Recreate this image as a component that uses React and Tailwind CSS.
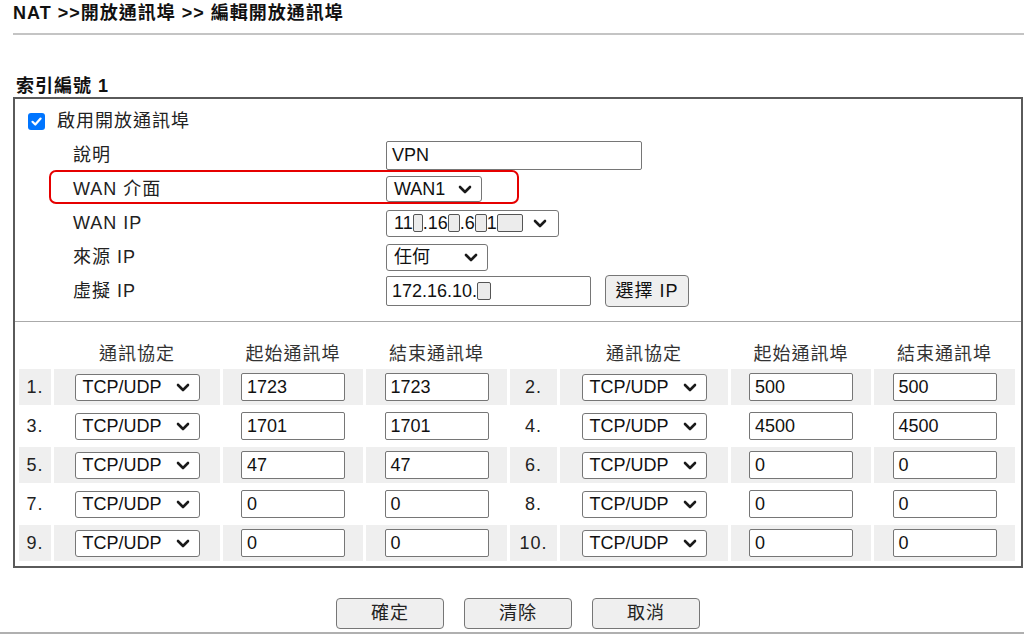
import React from 'react';

const font = { fontFamily: '"Liberation Sans", "Noto Sans CJK TC", sans-serif' };

function Chevron() {
    return (
        <svg width="14" height="9" viewBox="0 0 14 9" className="shrink-0">
            <path d="M2 2 L7 7 L12 2" fill="none" stroke="#1a1a1a" strokeWidth="2.6" strokeLinecap="round" strokeLinejoin="round" />
        </svg>
    );
}

function Select({ children, className }) {
    return (
        <div className={`flex items-center justify-between bg-white border border-[#767676] rounded-[3px] pl-[7px] pr-[9px] text-[18px] text-[#111] ${className}`}>
            <span className="flex items-center whitespace-nowrap">{children}</span>
            <Chevron />
        </div>
    );
}

function TextBox({ value, className }) {
    return (
        <div className={`flex items-center bg-white border border-[#767676] rounded-[2px] pl-[5px] text-[18px] text-[#111] whitespace-nowrap ${className}`}>
            {value}
        </div>
    );
}

function Mask({ w = 'w-[10px]' }) {
    return <span className={`inline-block ${w} h-[18px] border border-[#555] bg-[#ececec] rounded-[2px]`} />;
}

const cols = 'grid grid-cols-[32px_166px_140px_141px_47px_168px_140px_141px] gap-x-[3px]';

const rows = [
    [1, '1723', '1723', 2, '500', '500'],
    [3, '1701', '1701', 4, '4500', '4500'],
    [5, '47', '47', 6, '0', '0'],
    [7, '0', '0', 8, '0', '0'],
    [9, '0', '0', 10, '0', '0'],
];

function FormRow({ label, children }) {
    return (
        <div className="flex items-center h-[34px] pl-[58px]">
            <div className="w-[313px] text-[18px] tracking-[1px] text-[#222]">{label}</div>
            <div className="flex items-center gap-[14px]">{children}</div>
        </div>
    );
}

export default function App() {
    return (
        <div className="relative w-[1024px] h-[635px] bg-white overflow-hidden text-[#222]" style={font}>
            <div className="pl-[13px] h-[26px] leading-[26px] text-[18px] font-bold tracking-[1px] text-[#111]">
                NAT &gt;&gt;開放通訊埠 &gt;&gt; 編輯開放通訊埠
            </div>
            <div className="ml-[13px] mt-[7px] h-[2px] bg-[#c4c4c4]" />

            <div className="mt-[40px] pl-[16px] leading-[22px] text-[18px] font-bold tracking-[1px] text-[#111]">索引編號 1</div>

            <div className="ml-[13px] w-[1010px] border-2 border-[#5a5a5a]">
                <div className="pt-[5px]">
                    <div className="flex items-center h-[34px] pl-[13px] gap-[12px]">
                        <div className="w-[17px] h-[17px] rounded-[3px] bg-[#0075ff] flex items-center justify-center">
                            <svg width="13" height="13" viewBox="0 0 13 13">
                                <path d="M2.5 6.8 L5.3 9.5 L10.6 3.6" fill="none" stroke="#fff" strokeWidth="2.2" strokeLinecap="round" strokeLinejoin="round" />
                            </svg>
                        </div>
                        <span className="text-[18px] tracking-[1px]">啟用開放通訊埠</span>
                    </div>
                    <FormRow label="說明">
                        <TextBox value="VPN" className="w-[256px] h-[29px]" />
                    </FormRow>
                    <FormRow label="WAN 介面">
                        <Select className="w-[96px] h-[26px]">WAN1</Select>
                    </FormRow>
                    <FormRow label="WAN IP">
                        <Select className="w-[173px] h-[27px] !pr-[11px]">
                            11<Mask w="w-[10px]" />.16<Mask w="w-[12px]" />.6<Mask w="w-[12px]" />1<Mask w="w-[26px]" />
                        </Select>
                    </FormRow>
                    <FormRow label="來源 IP">
                        <Select className="w-[102px] h-[27px]">任何</Select>
                    </FormRow>
                    <FormRow label="虛擬 IP">
                        <TextBox value={<>172.16.10.<Mask w="w-[14px]" /></>} className="w-[205px] h-[30px]" />
                        <button className="w-[84px] h-[32px] bg-[#efefef] border border-[#767676] rounded-[4px] text-[18px] tracking-[1px] text-[#111]">
                            選擇 IP
                        </button>
                    </FormRow>
                </div>

                <div className="mt-[13px] h-[1px] bg-[#aaaaaa]" />

                <div className="ml-[4px] pb-[5px]">
                    <div className={`${cols} mt-[17px] h-[30px] items-center text-[18px] tracking-[1px] text-[#333] text-center`}>
                        <div />
                        <div>通訊協定</div>
                        <div>起始通訊埠</div>
                        <div>結束通訊埠</div>
                        <div />
                        <div>通訊協定</div>
                        <div>起始通訊埠</div>
                        <div>結束通訊埠</div>
                    </div>
                    <div className="flex flex-col gap-[3px]">
                        {rows.map((r, i) => {
                            const bg = i % 2 === 0 ? 'bg-[#efefef]' : 'bg-white';
                            const cell = `${bg} h-[36px] flex items-center justify-center`;
                            return (
                                <div key={i} className={cols}>
                                    <div className={`${cell} text-[18px] tracking-[1px] text-[#222]`}>{r[0]}.</div>
                                    <div className={cell}><Select className="w-[125px] h-[27px]">TCP/UDP</Select></div>
                                    <div className={cell}><TextBox value={r[1]} className="w-[104px] h-[28px]" /></div>
                                    <div className={cell}><TextBox value={r[2]} className="w-[104px] h-[28px]" /></div>
                                    <div className={`${cell} text-[18px] tracking-[1px] text-[#222]`}>{r[3]}.</div>
                                    <div className={cell}><Select className="w-[125px] h-[27px]">TCP/UDP</Select></div>
                                    <div className={cell}><TextBox value={r[4]} className="w-[104px] h-[28px]" /></div>
                                    <div className={cell}><TextBox value={r[5]} className="w-[104px] h-[28px]" /></div>
                                </div>
                            );
                        })}
                    </div>
                </div>
            </div>

            <div className="ml-[13px] w-[1010px] mt-[30px] flex justify-center gap-[20px]">
                {['確定', '清除', '取消'].map((t) => (
                    <button key={t} className="w-[108px] h-[31px] bg-[#efefef] border border-[#767676] rounded-[4px] text-[18px] tracking-[1px] text-[#222]">
                        {t}
                    </button>
                ))}
            </div>
            <div className="mt-[3px] h-[2px] bg-[#b0b0b0]" />

            <div className="absolute left-[49px] top-[170px] w-[470px] h-[34px] border-2 border-[#e60000] rounded-[7px]" />
        </div>
    );
}
